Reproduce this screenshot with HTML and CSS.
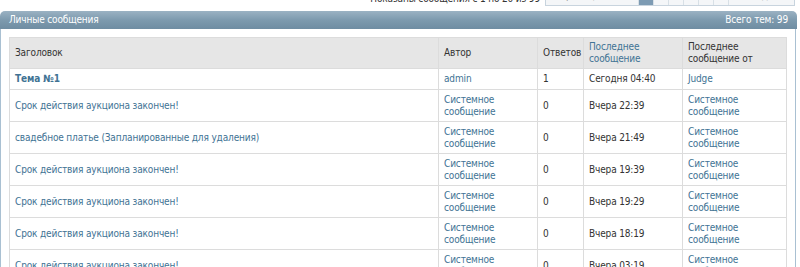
FILE: index.html
```html
<!DOCTYPE html>
<html lang="ru">
<head>
<meta charset="UTF-8">
<title>Личные сообщения</title>
<link rel="stylesheet" href="styles.css">
</head>
<body>
<div class="pagebar">
    <span class="pageinfo">Показаны сообщения с 1 по 20 из 99</span>
    <div class="pagenav">
        <span class="pages">Страница 1 из 5</span><span class="cur">1</span><span>2</span><span>3</span><span>4</span><span>5</span><span>&raquo;</span><span class="last">Последняя</span>
    </div>
</div>

<div class="block">
    <div class="block-head">
        <span>Личные сообщения</span>
        <span>Всего тем: 99</span>
    </div>
    <div class="block-body">
        <table class="pm">
            <tr class="head">
                <th class="c-title">Заголовок</th>
                <th class="c-author">Автор</th>
                <th class="c-num">Ответов</th>
                <th class="c-last"><a href="#">Последнее сообщение</a></th>
                <th class="c-from">Последнее сообщение от</th>
            </tr>
            <tr class="short">
                <td><a href="#" class="new">Тема №1</a></td>
                <td><a href="#">admin</a></td>
                <td>1</td>
                <td>Сегодня 04:40</td>
                <td><a href="#">Judge</a></td>
            </tr>
            <tr>
                <td><a href="#">Срок действия аукциона закончен!</a></td>
                <td><a href="#">Системное сообщение</a></td>
                <td>0</td>
                <td>Вчера 22:39</td>
                <td><a href="#">Системное сообщение</a></td>
            </tr>
            <tr>
                <td><a href="#">свадебное платье (Запланированные для удаления)</a></td>
                <td><a href="#">Системное сообщение</a></td>
                <td>0</td>
                <td>Вчера 21:49</td>
                <td><a href="#">Системное сообщение</a></td>
            </tr>
            <tr>
                <td><a href="#">Срок действия аукциона закончен!</a></td>
                <td><a href="#">Системное сообщение</a></td>
                <td>0</td>
                <td>Вчера 19:39</td>
                <td><a href="#">Системное сообщение</a></td>
            </tr>
            <tr>
                <td><a href="#">Срок действия аукциона закончен!</a></td>
                <td><a href="#">Системное сообщение</a></td>
                <td>0</td>
                <td>Вчера 19:29</td>
                <td><a href="#">Системное сообщение</a></td>
            </tr>
            <tr>
                <td><a href="#">Срок действия аукциона закончен!</a></td>
                <td><a href="#">Системное сообщение</a></td>
                <td>0</td>
                <td>Вчера 18:19</td>
                <td><a href="#">Системное сообщение</a></td>
            </tr>
            <tr>
                <td><a href="#">Срок действия аукциона закончен!</a></td>
                <td><a href="#">Системное сообщение</a></td>
                <td>0</td>
                <td>Вчера 03:19</td>
                <td><a href="#">Системное сообщение</a></td>
            </tr>
        </table>
    </div>
</div>
</body>
</html>
```

FILE: styles.css
```css
body {
    margin: 0;
    width: 797px;
    font-family: "DejaVu Sans Condensed", "DejaVu Sans", Verdana, sans-serif;
    font-size: 10px;
    letter-spacing: -0.15px;
    color: #333;
    background: #fff;
}

a {
    color: #417394;
    text-decoration: none;
}

/* top pagination strip (page is scrolled, only its bottom edge shows) */
.pagebar {
    height: 8px;
    overflow: hidden;
    display: flex;
    justify-content: flex-end;
    align-items: flex-end;
    padding-right: 2px;
}

.pageinfo {
    line-height: 12px;
    margin-right: 5px;
    margin-bottom: 3px;
    color: #333;
    white-space: nowrap;
}

.pagenav {
    display: flex;
    flex-shrink: 0;
    height: 18px;
    width: 248px;
    border: 1px solid #c8d4de;
    background: #f4f6f8;
    margin-bottom: 2px;
    overflow: hidden;
}

.pagenav span {
    flex-shrink: 0;
    width: 14px;
    text-align: center;
    line-height: 18px;
    border-right: 1px solid #d8e0e6;
    color: #999;
}

.pagenav .pages {
    width: 92px;
}

.pagenav .last {
    width: 60px;
    border-right: none;
}

.pagenav .cur {
    background: #7d9bb3;
    color: #fff;
}

/* block */
.block {
    margin-top: 3px;
}

.block-head {
    height: 18px;
    line-height: 18px;
    padding: 0 9px;
    display: flex;
    justify-content: space-between;
    color: #fff;
    background: linear-gradient(#9bb2c3, #7d9aae 50%, #6f8da2);
    border-radius: 5px 5px 0 0;
}

.block-body {
    width: 778px;
    border-left: 1px solid #a9c0d2;
    border-right: 1px solid #a9c0d2;
    padding: 8px;
}

.pm {
    width: 778px;
    border-collapse: collapse;
    table-layout: fixed;
}

.pm th,
.pm td {
    border: 1px solid #dcdcdc;
    padding: 0 5px;
    text-align: left;
    font-weight: normal;
    height: 31px;
    line-height: 12px;
}

.pm tr.head th {
    background: #e6e6e6;
    height: 30px;
}

.pm tr.short td {
    height: 20px;
}

.c-title { width: 418px; }
.c-author { width: 88px; }
.c-num { width: 35px; }
.c-last { width: 88px; }

.pm .new {
    font-weight: bold;
}
```
